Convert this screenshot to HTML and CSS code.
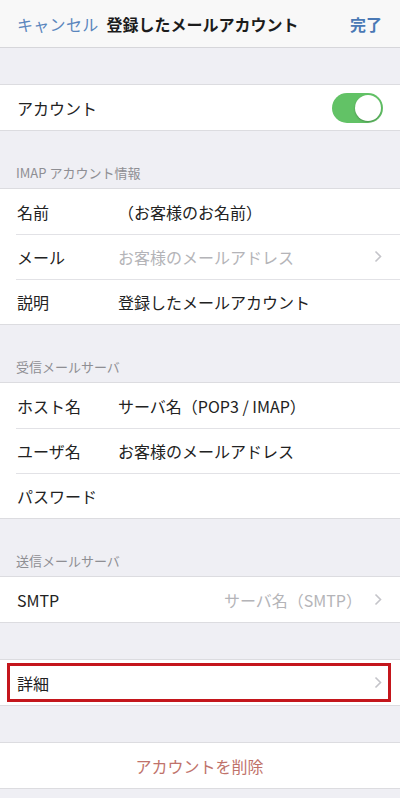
FILE: index.html
```
<!DOCTYPE html>
<html lang="ja">
<head>
    <meta charset="UTF-8">
    <meta name="viewport" content="width=device-width, initial-scale=1.0">
    <title>登録したメールアカウント</title>
    <link rel="stylesheet" href="styles.css">
</head>
<body>
    <div class="navbar">
        <span class="nav-cancel">キャンセル</span>
        <span class="nav-title">登録したメールアカウント</span>
        <span class="nav-done">完了</span>
    </div>

    <div class="gap"></div>
    <div class="group">
        <div class="row">
            <span class="label">アカウント</span>
            <span class="toggle"><span class="knob"></span></span>
        </div>
    </div>

    <div class="section-header">IMAP アカウント情報</div>
    <div class="group">
        <div class="row">
            <span class="label">名前</span>
            <span class="value">（お客様のお名前）</span>
        </div>
        <div class="row">
            <span class="label">メール</span>
            <span class="value muted">お客様のメールアドレス</span>
            <svg class="chevron" width="8" height="13" viewBox="0 0 8 13"><polyline points="1.5,1.5 6.5,6.5 1.5,11.5" fill="none" stroke="#c4c4c9" stroke-width="1.6"/></svg>
        </div>
        <div class="row">
            <span class="label">説明</span>
            <span class="value">登録したメールアカウント</span>
        </div>
    </div>

    <div class="section-header">受信メールサーバ</div>
    <div class="group">
        <div class="row">
            <span class="label">ホスト名</span>
            <span class="value">サーバ名（POP3 / IMAP）</span>
        </div>
        <div class="row">
            <span class="label">ユーザ名</span>
            <span class="value">お客様のメールアドレス</span>
        </div>
        <div class="row">
            <span class="label">パスワード</span>
        </div>
    </div>

    <div class="section-header">送信メールサーバ</div>
    <div class="group">
        <div class="row">
            <span class="label">SMTP</span>
            <span class="value muted right">サーバ名（SMTP）</span>
            <svg class="chevron" width="8" height="13" viewBox="0 0 8 13"><polyline points="1.5,1.5 6.5,6.5 1.5,11.5" fill="none" stroke="#c4c4c9" stroke-width="1.6"/></svg>
        </div>
    </div>

    <div class="gap"></div>
    <div class="group">
        <div class="row highlight">
            <span class="label">詳細</span>
            <span class="spacer"></span>
            <svg class="chevron" width="8" height="13" viewBox="0 0 8 13"><polyline points="1.5,1.5 6.5,6.5 1.5,11.5" fill="none" stroke="#c4c4c9" stroke-width="1.6"/></svg>
        </div>
    </div>

    <div class="gap"></div>
    <div class="group">
        <div class="row center">
            <span class="delete">アカウントを削除</span>
        </div>
    </div>
</body>
</html>
```

FILE: styles.css
```
body {
    margin: 0;
    background-color: #efeff4;
    font-family: "Noto Sans CJK JP", "Liberation Sans", sans-serif;
    color: #222;
}
.navbar {
    height: 47px;
    display: flex;
    align-items: center;
    padding: 0 17px;
    background-color: #f8f8f8;
    border-bottom: 1px solid #d6d6da;
    font-size: 16px;
}
.nav-cancel {
    color: #5a86bd;
    letter-spacing: 0.3px;
}
.nav-title {
    margin-left: 8px;
    font-weight: bold;
    color: #1c1c1c;
}
.nav-done {
    margin-left: auto;
    color: #4a79b5;
    font-weight: bold;
    margin-right: 1px;
}
.gap {
    height: 36px;
}
.group {
    background-color: #fff;
    border-top: 1px solid #dcdce0;
    border-bottom: 1px solid #dcdce0;
}
.row {
    height: 45px;
    display: flex;
    align-items: center;
    padding: 0 18px 0 17px;
    font-size: 16px;
    position: relative;
}
.row + .row::before {
    content: "";
    position: absolute;
    top: 0;
    left: 16px;
    right: 0;
    border-top: 1px solid #e2e2e6;
}
.label {
    width: 101px;
    flex-shrink: 0;
    color: #222;
}
.value {
    flex: 1;
    color: #222;
}
.value.muted {
    color: #b4b4b8;
}
.value.right {
    text-align: right;
    margin-right: 12px;
}
.spacer {
    flex: 1;
}
.chevron {
    flex-shrink: 0;
}
.toggle {
    margin-left: auto;
    width: 51px;
    height: 30px;
    border-radius: 15px;
    background-color: #62c266;
    position: relative;
    margin-right: -1px;
}
.knob {
    position: absolute;
    right: 2px;
    top: 2px;
    width: 26px;
    height: 26px;
    border-radius: 50%;
    background-color: #fff;
    box-shadow: 0 1px 2px rgba(0, 0, 0, 0.25);
}
.section-header {
    height: 57px;
    display: flex;
    align-items: flex-end;
    padding: 0 0 6px 16px;
    box-sizing: border-box;
    font-size: 13px;
    color: #8e8e93;
}
.highlight::after {
    content: "";
    position: absolute;
    left: 7px;
    right: 9px;
    top: 3px;
    bottom: 3px;
    border: 3px solid #c4161c;
}
.center {
    justify-content: center;
}
.delete {
    color: #c0726a;
}
```
